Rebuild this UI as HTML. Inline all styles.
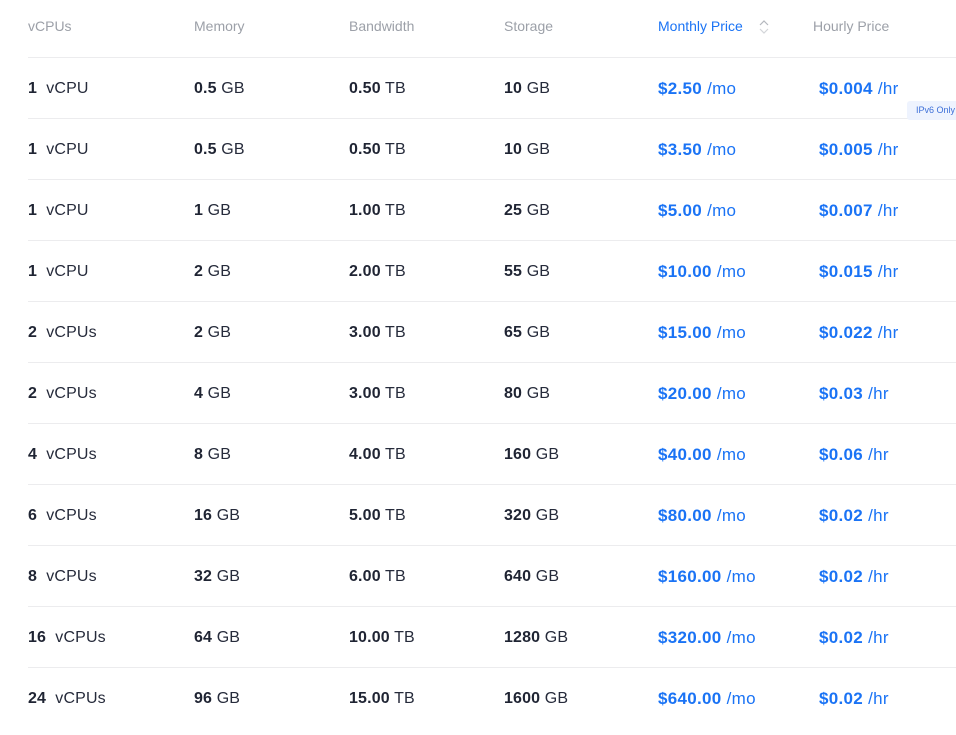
<!DOCTYPE html>
<html><head><style>
body{margin:0;width:956px;height:735px;overflow:hidden;background:#fff;font-family:"Liberation Sans",Arial,sans-serif;}
.h{position:absolute;top:18px;font-size:14px;color:#9ca0a8;}
.line{position:absolute;left:28px;width:928px;height:1px;background:#ececee;}
.c{position:absolute;font-size:16px;color:#262b3b;line-height:20px;letter-spacing:0.15px;}
.c b{font-weight:bold;color:#1f2433;}
.p{color:#1a73f5;font-size:17px;letter-spacing:0.3px;}
.p b{color:#1a73f5;}
.badge{position:absolute;left:907px;top:101px;width:60px;height:19px;background:#eef3fe;border-radius:3px;color:#3c6fd8;font-size:9px;line-height:19px;padding-left:9px;box-sizing:border-box;}
</style></head><body>
<div class="h" style="left:28px">vCPUs</div>
<div class="h" style="left:194px">Memory</div>
<div class="h" style="left:349px">Bandwidth</div>
<div class="h" style="left:504px">Storage</div>
<div class="h" style="left:658px;color:#1a73f5">Monthly Price</div>
<svg style="position:absolute;left:758px;top:18px" width="12" height="18" viewBox="0 0 12 18"><path d="M2 7 L6 3 L10 7" fill="none" stroke="#b5b8be" stroke-width="1.2"/><path d="M2 11 L6 15 L10 11" fill="none" stroke="#d3d5d9" stroke-width="1.2"/></svg>
<div class="h" style="left:813px">Hourly Price</div>
<div id="rows"></div>
<div class="badge">IPv6 Only</div>
<script>
var d=[["1","vCPU","0.5","0.50","10","2.50","0.004"],["1","vCPU","0.5","0.50","10","3.50","0.005"],["1","vCPU","1","1.00","25","5.00","0.007"],["1","vCPU","2","2.00","55","10.00","0.015"],["2","vCPUs","2","3.00","65","15.00","0.022"],["2","vCPUs","4","3.00","80","20.00","0.03"],["4","vCPUs","8","4.00","160","40.00","0.06"],["6","vCPUs","16","5.00","320","80.00","0.02"],["8","vCPUs","32","6.00","640","160.00","0.02"],["16","vCPUs","64","10.00","1280","320.00","0.02"],["24","vCPUs","96","15.00","1600","640.00","0.02"]];
var h='';
for(var i=0;i<d.length;i++){var r=d[i],y=57+61*i,t=y+22;
h+='<div class="line" style="top:'+y+'px"></div>';
h+='<div class="c" style="left:28px;top:'+t+'px"><b>'+r[0]+'</b>&nbsp; '+r[1]+'</div>';
h+='<div class="c" style="left:194px;top:'+t+'px"><b>'+r[2]+'</b> GB</div>';
h+='<div class="c" style="left:349px;top:'+t+'px"><b>'+r[3]+'</b> TB</div>';
h+='<div class="c" style="left:504px;top:'+t+'px"><b>'+r[4]+'</b> GB</div>';
h+='<div class="c p" style="left:658px;top:'+t+'px"><b>$'+r[5]+'</b> /mo</div>';
h+='<div class="c p" style="left:819px;top:'+t+'px"><b>$'+r[6]+'</b> /hr</div>';}
document.getElementById('rows').innerHTML=h;
</script>
</body></html>
